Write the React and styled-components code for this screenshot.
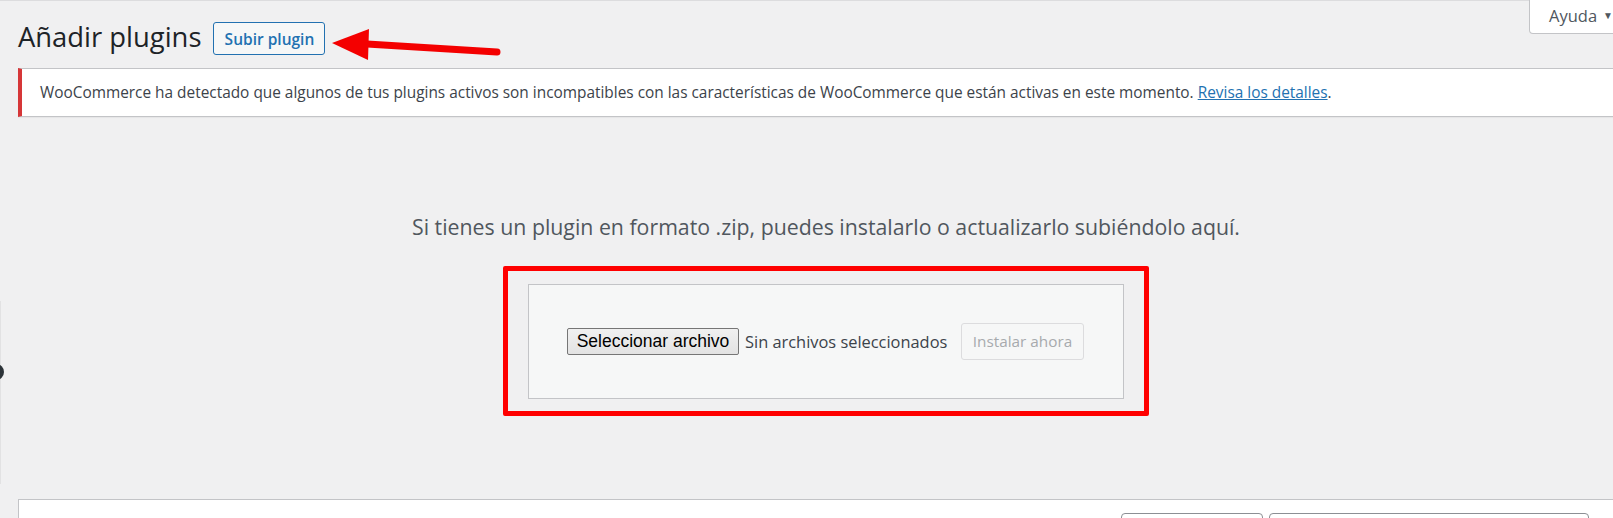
import React from "react";
import styled, { createGlobalStyle } from "styled-components";

const Global = createGlobalStyle`
  html, body { margin: 0; padding: 0; background: #f0f0f1; overflow: hidden; }
  body { font-family: "Open Sans", "Noto Sans", sans-serif; color: #3c434a; }
  * { box-sizing: border-box; }
`;

const Page = styled.div`
  position: relative;
  width: 1634px;
  min-height: 518px;
  border-top: 1px solid #dcdcde;
`;

const Wrap = styled.div`
  margin-left: 18px;
  display: flex;
  flex-direction: column;
`;

const HelpTab = styled.button`
  position: absolute;
  top: -1px;
  left: 1529px;
  width: 110px;
  height: 34px;
  background: #fff;
  border: 1px solid #c3c4c7;
  border-top: none;
  border-radius: 0 0 4px 4px;
  font-family: inherit;
  font-size: 16.5px;
  color: #50575e;
  text-align: left;
  padding: 0 0 3px 19px;
  display: flex;
  align-items: center;
  gap: 6px;
  white-space: nowrap;
`;

const Caret = styled.span`
  font-size: 10px;
  color: #50575e;
`;

const HeadRow = styled.div`
  display: flex;
  align-items: center;
  gap: 12px;
  height: 33px;
  margin-top: 21px;
`;

const Title = styled.h1`
  margin: 0;
  font-size: 27.4px;
  font-weight: 400;
  color: #1d2327;
  line-height: 1;
  padding-bottom: 3px;
`;

const UploadBtn = styled.button`
  height: 33px;
  width: 112px;
  border: 1px solid #2271b1;
  border-radius: 3px;
  background: #f6f7f7;
  color: #2271b1;
  font-family: inherit;
  font-size: 15.5px;
  font-weight: 600;
  padding: 0;
`;

const Notice = styled.div`
  margin-top: 13px;
  height: 49px;
  background: #fff;
  border: 1px solid #c3c4c7;
  border-left: 4px solid #d63638;
  box-shadow: 0 1px 1px rgba(0, 0, 0, 0.04);
  display: flex;
  align-items: center;
  padding-left: 18px;
  font-size: 15.4px;
  color: #3c434a;
  white-space: nowrap;
`;

const Link = styled.a`
  color: #2271b1;
  text-decoration: underline;
`;

const Help = styled.p`
  margin: 96px 0 0;
  text-align: center;
  font-size: 21.3px;
  color: #50575e;
  line-height: 28px;
`;

const Highlight = styled.div`
  align-self: center;
  margin-top: 25px;
  width: 646px;
  height: 150px;
  border: 5px solid #ff0000;
  border-radius: 2px;
  display: flex;
  justify-content: center;
  align-items: center;
`;

const UploadForm = styled.form`
  width: 596px;
  height: 115px;
  background: #f6f7f7;
  border: 1px solid #c3c4c7;
  display: flex;
  align-items: center;
  justify-content: space-between;
  padding: 0 39px 0 38px;
`;

const FileGroup = styled.div`
  display: flex;
  align-items: center;
  gap: 6px;
`;

const FileBtn = styled.span`
  width: 172px;
  height: 27px;
  border: 1px solid #767676;
  border-radius: 2px;
  background: linear-gradient(#f0f0f0, #e3e3e3);
  font-family: "Liberation Sans", Arial, sans-serif;
  font-size: 17.5px;
  color: #000;
  display: flex;
  align-items: center;
  justify-content: center;
`;

const FileLabel = styled.span`
  font-size: 16.4px;
  color: #3c434a;
`;

const InstallBtn = styled.button`
  width: 123px;
  height: 37px;
  border: 1px solid #dcdcde;
  border-radius: 3px;
  background: #f6f7f7;
  color: #a7aaad;
  font-family: inherit;
  font-size: 15.3px;
  padding: 0;
`;

const FilterBar = styled.div`
  margin-top: 83px;
  height: 40px;
  background: #fff;
  border: 1px solid #c3c4c7;
  border-right: none;
  display: flex;
  justify-content: flex-end;
  gap: 6px;
  padding: 13px 45px 0 0;
`;

const Field = styled.div`
  width: ${(p) => p.$w}px;
  height: 30px;
  border: 1px solid #8c8f94;
  border-radius: 4px;
  background: #fff;
`;

const Arrow = styled.svg`
  position: absolute;
  left: 325px;
  top: 20px;
`;

const EdgeLine = styled.div`
  position: absolute;
  left: 0;
  top: 300px;
  width: 1px;
  height: 183px;
  background: #e2e2e3;
`;

const EdgeDot = styled.div`
  position: absolute;
  left: -12px;
  top: 363px;
  width: 16px;
  height: 16px;
  border-radius: 50%;
  background: #2c3338;
`;

export default function App() {
  return (
    <Page>
      <Global />
      <HelpTab>
        Ayuda <Caret>▼</Caret>
      </HelpTab>
      <Wrap>
        <HeadRow>
          <Title>Añadir plugins</Title>
          <UploadBtn>Subir plugin</UploadBtn>
        </HeadRow>
        <Notice>
          <span>
            WooCommerce ha detectado que algunos de tus plugins activos son incompatibles con las
            características de WooCommerce que están activas en este momento.{" "}
            <Link href="#">Revisa los detalles</Link>.
          </span>
        </Notice>
        <Help>Si tienes un plugin en formato .zip, puedes instalarlo o actualizarlo subiéndolo aquí.</Help>
        <Highlight>
          <UploadForm>
            <FileGroup>
              <FileBtn>Seleccionar archivo</FileBtn>
              <FileLabel>Sin archivos seleccionados</FileLabel>
            </FileGroup>
            <InstallBtn type="button">Instalar ahora</InstallBtn>
          </UploadForm>
        </Highlight>
        <FilterBar>
          <Field $w={142} />
          <Field $w={320} />
        </FilterBar>
      </Wrap>
      <Arrow width="180" height="50" viewBox="0 0 180 50">
        <line x1="42" y1="23" x2="172" y2="31" stroke="#f40000" strokeWidth="7" strokeLinecap="round" />
        <polygon points="7,22 44,8 43,39" fill="#f40000" />
      </Arrow>
      <EdgeLine />
      <EdgeDot />
    </Page>
  );
}
